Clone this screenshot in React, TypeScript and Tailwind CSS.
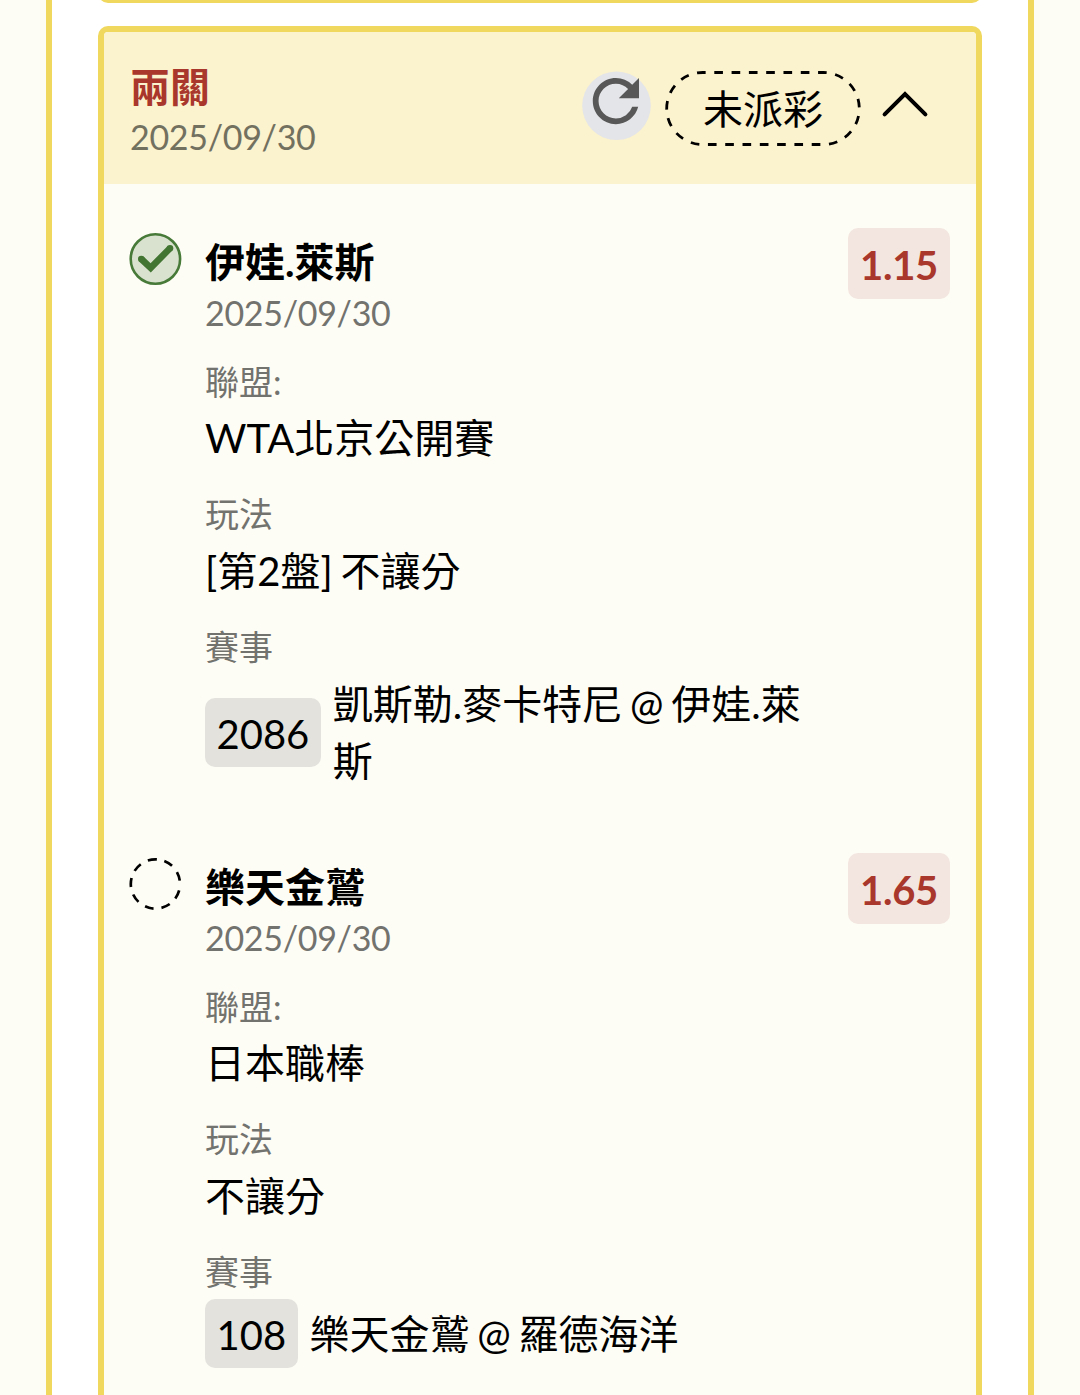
import type { ReactNode } from 'react';

interface Leg {
  pick: string;
  date: string;
  odds: string;
  league: string;
  play: string;
  matchNo: string;
  match: string;
  won: boolean;
}

const legs: Leg[] = [
  {
    pick: '伊娃.萊斯',
    date: '2025/09/30',
    odds: '1.15',
    league: 'WTA北京公開賽',
    play: '[第2盤] 不讓分',
    matchNo: '2086',
    match: '凱斯勒.麥卡特尼 @ 伊娃.萊斯',
    won: true,
  },
  {
    pick: '樂天金鷲',
    date: '2025/09/30',
    odds: '1.65',
    league: '日本職棒',
    play: '不讓分',
    matchNo: '108',
    match: '樂天金鷲 @ 羅德海洋',
    won: false,
  },
];

// nine dashes, with a wider gap where the stroke starts and ends
const pendingDashes = [...Array(8).fill('9 7.85').flat(), '9 30'].join(' ');

const WonIcon = () => (
  <svg className="block size-[53px]" viewBox="0 0 53 53" fill="none">
    <circle cx="26.4" cy="26" r="24.7" fill="#d9e2cf" stroke="#477a39" strokeWidth="2.6" />
    <path d="M12.3 26 21.7 34.9 41 15.2" stroke="#417531" strokeWidth="6.6" />
    <circle cx="12.3" cy="26" r="3.3" fill="#417531" />
    <circle cx="41" cy="15.2" r="3.3" fill="#417531" />
  </svg>
);

const PendingIcon = () => (
  <svg className="block size-[53px]" viewBox="0 0 53 53" fill="none">
    <circle
      cx="26.4"
      cy="26"
      r="24.6"
      stroke="#000"
      strokeWidth="2.7"
      strokeDasharray={pendingDashes}
      transform="rotate(15 26.4 26)"
    />
  </svg>
);

const RefreshButton = () => (
  <button className="size-[70px]">
    <svg className="block size-[70px]" viewBox="0 0 70 70">
      <circle cx="35.5" cy="34.7" r="34.3" fill="#e4e5e8" />
      <path
        transform="translate(0.2 -4.6) scale(2.89)"
        fill="#585858"
        d="M17.65 6.35A7.958 7.958 0 0 0 12 4c-4.42 0-7.99 3.58-7.99 8s3.57 8 7.99 8c3.73 0 6.84-2.55 7.73-6h-2.08A5.99 5.99 0 0 1 12 18c-3.31 0-6-2.69-6-6s2.69-6 6-6c1.66 0 3.14.69 4.22 1.78L13 11h7V4l-2.35 2.35z"
      />
    </svg>
  </button>
);

const StatusPill = ({ children }: { children: ReactNode }) => (
  <div className="relative flex h-[75px] w-[196px] items-center justify-center">
    <svg className="absolute inset-0 size-full" viewBox="0 0 196 75" fill="none">
      <rect
        x="1.7"
        y="1.5"
        width="192.6"
        height="72"
        rx="36"
        stroke="#000"
        strokeWidth="2.8"
        pathLength="54"
        strokeDasharray="1 1"
        strokeDashoffset="0.66"
      />
    </svg>
    <span className="relative pt-[2px] text-[40px] leading-[57px]">{children}</span>
  </div>
);

const Chevron = () => (
  <svg className="block h-[28px] w-[48px]" viewBox="0 0 48 28" fill="none">
    <path d="M3.6 24.4 24 4 44.4 24.4" stroke="#000" strokeWidth="4" strokeLinecap="round" />
  </svg>
);

const Field = ({ label, children }: { label: string; children: ReactNode }) => (
  <div className="mt-[21px]">
    <div className="text-[34px] leading-[54.5px] text-[#72726e]">{label}</div>
    {children}
  </div>
);

const LegItem = ({ leg }: { leg: Leg }) => (
  <div className="flex items-start">
    <div className="mr-[23px] -ml-px shrink-0">{leg.won ? <WonIcon /> : <PendingIcon />}</div>
    <div className="min-w-0 flex-1">
      <div className="pt-px text-[40px] leading-[57px] font-bold">{leg.pick}</div>
      <div className="text-[34px] leading-[43.5px] tracking-[-0.3px] text-[#72726e]">{leg.date}</div>
      <div className="-mt-px">
        <Field label="聯盟:">
          <div className="pt-px text-[40px] leading-[56px]">{leg.league}</div>
        </Field>
        <Field label="玩法">
          <div className="pt-[2px] text-[40px] leading-[55px] [word-spacing:-2.5px]">{leg.play}</div>
        </Field>
        <Field label="賽事">
          <div className="flex items-center">
            <span className="mr-[12px] shrink-0 rounded-[10px] bg-[#e3e2dc] px-[11.5px] pt-[3px] text-[40px] leading-[66px]">
              {leg.matchNo}
            </span>
            <span className="pt-[2px] text-[40px] leading-[57px] [word-spacing:-2.5px]">{leg.match}</span>
          </div>
        </Field>
      </div>
    </div>
    <div className="-mt-[5px] ml-6 w-[102px] shrink-0 rounded-[10px] bg-[#f3e6e0] pt-[3px] text-center text-[40px] leading-[68px] font-bold tracking-[-0.3px] text-[#a9372b]">
      {leg.odds}
    </div>
  </div>
);

export default function App() {
  return (
    <div className="h-[1395px] overflow-hidden bg-[#fefdf5] px-[46px] font-['Lato','Noto_Sans_CJK_TC',sans-serif] text-black">
      <div className="h-full border-x-[6px] border-[#f0d85f] bg-white px-[46px]">
        {/* bottom edge of the previous slip */}
        <div className="h-[3px] overflow-hidden">
          <div className="-mt-[37px] h-[40px] rounded-[10px] border-[5.5px] border-[#f0d85f]" />
        </div>

        <div className="mt-[23px] h-[1500px] overflow-hidden rounded-[10px] border-[6px] border-[#f0d85f] bg-[#fefdf5]">
          <div className="flex h-[152px] items-start bg-[#fbf2ce] pl-[26px]">
            <div className="flex-1 pt-[27px]">
              <div className="text-[40px] leading-[57px] font-bold text-[#a9372b]">兩關</div>
              <div className="text-[34px] leading-[42px] tracking-[-0.3px] text-[#72705f]">2025/09/30</div>
            </div>
            <div className="flex pt-[39px] pr-[47px]">
              <RefreshButton />
              <div className="ml-[14px]">
                <StatusPill>未派彩</StatusPill>
              </div>
              <button className="mt-[19px] ml-[20px] self-start">
                <Chevron />
              </button>
            </div>
          </div>

          <div className="space-y-[68px] px-[26px] pt-[49px]">
            {legs.map((leg) => (
              <LegItem key={leg.matchNo} leg={leg} />
            ))}
          </div>
        </div>
      </div>
    </div>
  );
}
